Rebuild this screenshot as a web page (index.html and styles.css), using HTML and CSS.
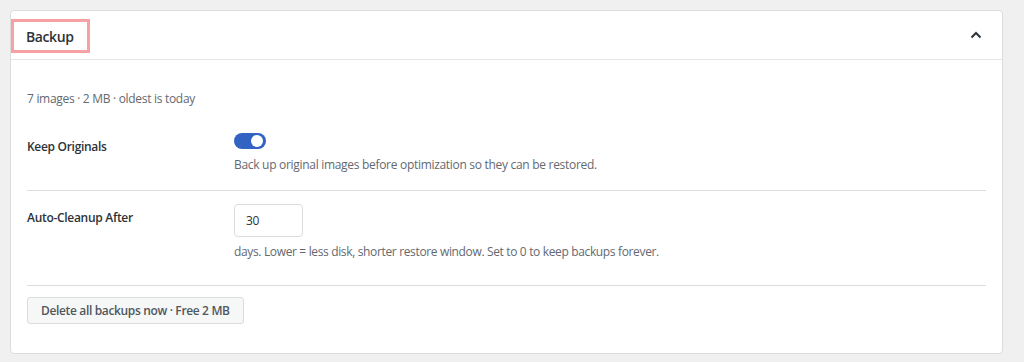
FILE: index.html
```html
<!DOCTYPE html>
<html lang="en">
<head>
    <meta charset="UTF-8">
    <meta name="viewport" content="width=device-width, initial-scale=1.0">
    <title>Backup</title>
    <link rel="stylesheet" href="styles.css">
</head>
<body>

<div class="card">
    <div class="card-head">
        <h2 class="card-title">Backup</h2>
        <button class="collapse-btn" aria-label="Collapse">
            <svg width="12" height="8" viewBox="0 0 12 8"><path d="M1.5 6.5 L6 2 L10.5 6.5" fill="none" stroke="#2c3338" stroke-width="2"/></svg>
        </button>
    </div>

    <div class="card-body">
        <p class="summary">7 images · 2 MB · oldest is today</p>

        <div class="row row-first">
            <div class="row-label">Keep Originals</div>
            <div class="row-field">
                <label class="toggle">
                    <input type="checkbox" checked>
                    <span class="slider"></span>
                </label>
                <p class="help">Back up original images before optimization so they can be restored.</p>
            </div>
        </div>

        <div class="row row-last">
            <div class="row-label">Auto-Cleanup After</div>
            <div class="row-field">
                <input class="num-input" type="text" value="30">
                <p class="help">days. Lower = less disk, shorter restore window. Set to 0 to keep backups forever.</p>
            </div>
        </div>

        <div class="actions">
            <button class="btn">Delete all backups now · Free 2 MB</button>
        </div>
    </div>
</div>

</body>
</html>
```

FILE: styles.css
```css
body {
    margin: 0;
    padding: 10px;
    background: #f0f0f1;
    font-family: "Open Sans", "Noto Sans", sans-serif;
    font-size: 12px;
    letter-spacing: -0.3px;
    color: #1d2327;
}
.card {
    width: 991px;
    background: #fff;
    border: 1px solid #dcdcde;
    border-radius: 4px;
}
.card-head {
    display: flex;
    align-items: center;
    justify-content: space-between;
    height: 48px;
    padding: 0 17px 0 16px;
    border-bottom: 1px solid #e5e5e5;
}
.card-title {
    margin: 2px 0 0 -13px;
    font-size: 14px;
    line-height: 19px;
    font-weight: 600;
    letter-spacing: -0.4px;
    color: #2c3338;
    outline: 3px solid #f7a1a5;
    padding: 5px 13px 4px 12px;
}
.collapse-btn {
    background: none;
    border: none;
    padding: 0;
    display: flex;
    margin-right: 3px;
}
.card-body {
    padding: 30px 16px 29px 16px;
}
.summary {
    margin: 0 0 26px;
    line-height: 17px;
    color: #646970;
}
.row {
    display: flex;
    border-bottom: 1px solid #dcdcde;
}
.row-first {
    padding: 0 0 17px;
}
.row-last {
    padding: 13px 0 25px;
}
.row-label {
    width: 207px;
    font-weight: 600;
    line-height: 17px;
    padding-top: 5px;
    color: #2c3338;
}
.row-last .row-label {
    padding-top: 5px;
}
.row-field {
    flex: 1;
}
.toggle {
    display: block;
    position: relative;
    width: 32px;
    height: 16px;
}
.toggle input {
    display: none;
}
.slider {
    position: absolute;
    inset: 0;
    background: #3263c3;
    border-radius: 8px;
}
.slider::after {
    content: "";
    position: absolute;
    right: 3px;
    top: 2px;
    width: 12px;
    height: 12px;
    border-radius: 50%;
    background: #fff;
}
.help {
    margin: 7px 0 0;
    line-height: 17px;
    color: #646970;
}
.row-last .help {
    margin-top: 6px;
    letter-spacing: -0.35px;
}
.num-input {
    display: block;
    width: 69px;
    height: 33px;
    box-sizing: border-box;
    border: 1px solid #dcdcde;
    border-radius: 4px;
    padding: 0 11px;
    font-family: inherit;
    font-size: 12px;
    letter-spacing: inherit;
    color: #2c3338;
}
.actions {
    padding-top: 11px;
}
.btn {
    background: #f6f7f7;
    border: 1px solid #dcdcde;
    border-radius: 3px;
    padding: 0 13px;
    height: 27px;
    font-family: inherit;
    font-size: 12px;
    font-weight: 600;
    letter-spacing: -0.35px;
    color: #50575e;
}
```
